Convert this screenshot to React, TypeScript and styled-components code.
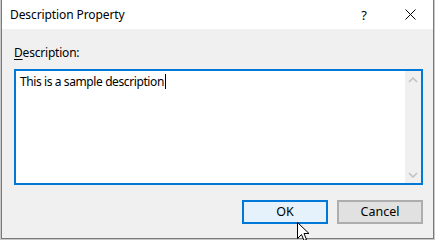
import React from "react";
import styled, { createGlobalStyle } from "styled-components";

const GlobalStyle = createGlobalStyle`
  html, body {
    margin: 0;
    padding: 0;
    background: #c9c9c9;
  }
  body {
    width: 435px;
    height: 240px;
    overflow: hidden;
    font-family: "Segoe UI", "Noto Sans", "Liberation Sans", sans-serif;
    font-size: 12px;
    color: #000;
  }
`;

const Screen = styled.div`
  position: relative;
  width: 435px;
  height: 240px;
  padding-left: 1px;
  box-sizing: border-box;
`;

const Window = styled.div`
  width: 433px;
  height: 239px;
  box-sizing: border-box;
  border: 1px solid #7a7a7a;
  border-top: none;
  background: #f0f0f0;
  display: flex;
  flex-direction: column;
`;

const TitleBar = styled.div`
  height: 29px;
  background: #fff;
  display: flex;
  align-items: center;
  flex-shrink: 0;
`;

const Title = styled.div`
  flex: 1;
  padding-left: 8px;
  padding-bottom: 1px;
  letter-spacing: -0.1px;
`;

const TitleButton = styled.div`
  width: 46px;
  height: 29px;
  display: flex;
  align-items: center;
  justify-content: center;
  font-size: 13px;
`;

const Body = styled.div`
  flex: 1;
  display: flex;
  flex-direction: column;
  padding: 15px 10px 0 12px;
`;

const Label = styled.div`
  height: 18px;
  line-height: 18px;
  margin-bottom: 7px;
  letter-spacing: -0.2px;
  u {
    text-decoration: underline;
    text-underline-offset: 2px;
  }
`;

const TextBox = styled.div`
  height: 116px;
  box-sizing: border-box;
  border: 2px solid #0078d7;
  background: #fff;
  display: flex;
`;

const TextArea = styled.div`
  flex: 1;
  padding: 3px 4px;
  line-height: 16px;
  letter-spacing: -0.4px;
`;

const Caret = styled.span`
  display: inline-block;
  width: 1px;
  height: 15px;
  margin-left: 1px;
  background: #000;
  vertical-align: -3px;
`;

const ScrollBar = styled.div`
  width: 16px;
  background: #f0f0f0;
  display: flex;
  flex-direction: column;
  justify-content: space-between;
  align-items: center;
  padding: 6px 0 5px;
`;

const Buttons = styled.div`
  display: flex;
  justify-content: flex-end;
  gap: 9px;
  margin-top: 15px;
`;

const Button = styled.div<{ $default?: boolean }>`
  width: 86px;
  height: 24px;
  box-sizing: border-box;
  border: 2px solid ${({ $default }) => ($default ? "#0078d7" : "#adadad")};
  background: ${({ $default }) => ($default ? "#e5f1fb" : "#e1e1e1")};
  display: flex;
  align-items: center;
  justify-content: center;
  padding-bottom: 1px;
  font-size: 12.5px;
`;

const Cursor = styled.svg`
  position: absolute;
  left: 297px;
  top: 222px;
`;

const Chevron = ({ up }: { up?: boolean }) => (
  <svg width="10" height="6" viewBox="0 0 10 6">
    <path
      d={up ? "M1 5 L5 1 L9 5" : "M1 1 L5 5 L9 1"}
      fill="none"
      stroke="#c2c2c2"
      strokeWidth="1.6"
    />
  </svg>
);

export default function App() {
  return (
    <>
      <GlobalStyle />
      <Screen>
        <Window>
          <TitleBar>
            <Title>Description Property</Title>
            <TitleButton>?</TitleButton>
            <TitleButton>
              <svg width="11" height="11" viewBox="0 0 11 11">
                <path d="M0.5 0.5 L10.5 10.5 M10.5 0.5 L0.5 10.5" stroke="#000" strokeWidth="1" />
              </svg>
            </TitleButton>
          </TitleBar>
          <Body>
            <Label>
              <u>D</u>escription:
            </Label>
            <TextBox>
              <TextArea>
                This is a sample description
                <Caret />
              </TextArea>
              <ScrollBar>
                <Chevron up />
                <Chevron />
              </ScrollBar>
            </TextBox>
            <Buttons>
              <Button $default>OK</Button>
              <Button>Cancel</Button>
            </Buttons>
          </Body>
        </Window>
        <Cursor width="13" height="20" viewBox="0 0 13 20">
          <path
            d="M0.5 0.5 L0.5 16.5 L4.5 12.5 L7 18.5 L9.5 17.5 L7 11.5 L12 11.5 Z"
            fill="#fff"
            stroke="#000"
            strokeWidth="1"
          />
        </Cursor>
      </Screen>
    </>
  );
}
